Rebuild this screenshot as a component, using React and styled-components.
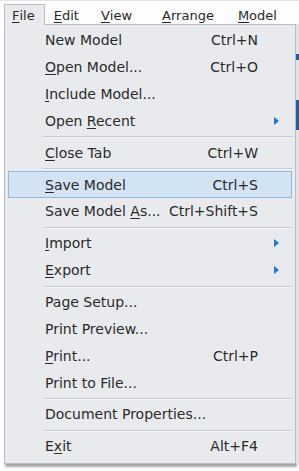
import React from 'react'
import styled, { createGlobalStyle } from 'styled-components'

const Global = createGlobalStyle`
    html, body {
        margin: 0;
        padding: 0;
        background: #ffffff;
    }
    body {
        font-family: "DejaVu Sans", "Liberation Sans", sans-serif;
        font-size: 14px;
        color: #2a2a2a;
    }
`

const Page = styled.div`
    width: 299px;
    height: 471px;
    overflow: hidden;
    display: flex;
    flex-direction: column;
    background: #ffffff;
`

const MenuBar = styled.div`
    height: 25px;
    display: flex;
    align-items: stretch;
    padding: 3px 0 0 4px;
    box-sizing: border-box;
    border-top: 1px solid #e2e4e8;
    background: #fdfdfd;
    font-size: 13px;
`

const BarItem = styled.div`
    display: flex;
    align-items: center;
    padding: ${p => (p.$active ? '0 9px 0 7px' : '0')};
    margin-left: ${p => p.$ml || 0}px;
    box-sizing: border-box;
    border: 1px solid ${p => (p.$active ? '#b9bdc5' : 'transparent')};
    border-bottom: none;
    background: ${p => (p.$active ? '#e9eaee' : 'transparent')};
    position: relative;
    z-index: 2;
`

const Key = styled.span`
    text-decoration: underline;
    text-underline-offset: 2px;
`

const Body = styled.div`
    flex: 1;
    display: flex;
    align-items: flex-start;
    padding-left: 4px;
`

const Menu = styled.div`
    width: 292px;
    margin-top: -1px;
    box-sizing: border-box;
    padding: 2px 0 3px 0;
    background: #e9eaee;
    border: 1px solid #b9bdc5;
    box-shadow: 1px 3px 2px rgba(0, 0, 0, 0.35);
    display: flex;
    flex-direction: column;
`

const Row = styled.div`
    height: 26.85px;
    display: flex;
    align-items: center;
    box-sizing: border-box;
    margin: 0 ${p => (p.$selected ? 3 : 0)}px;
    padding-left: ${p => (p.$selected ? 36 : 39)}px;
    padding-right: ${p => (p.$selected ? 11 : 14)}px;
    border: 1px solid ${p => (p.$selected ? '#93b8de' : 'transparent')};
    background: ${p => (p.$selected ? '#d2e3f4' : 'transparent')};
`

const Label = styled.span`
    flex: 1;
    white-space: nowrap;
`

const Shortcut = styled.span`
    white-space: nowrap;
    margin-right: 22px;
`

const Arrow = styled.span`
    width: 0;
    height: 0;
    border-top: 4px solid transparent;
    border-bottom: 4px solid transparent;
    border-left: 5px solid #1a78d0;
    margin-right: 1px;
`

const Separator = styled.div`
    height: 5px;
    display: flex;
    align-items: center;
    padding: 0 2px 0 38px;
    &::after {
        content: '';
        flex: 1;
        height: 1px;
        background: #c7cbd3;
        box-shadow: 0 1px 0 #f4f5f7;
    }
`

const Backdrop = styled.div`
    flex: 1;
    align-self: stretch;
    display: flex;
    flex-direction: column;
    margin-top: -1px;
    background: #dfe2e7;
    height: 440px;
`

const BackBlue = styled.div`
    height: ${p => p.$h}px;
    margin-top: ${p => p.$top}px;
    background: #1e5fa8;
`

const items = [
    { label: <>New Model</>, shortcut: 'Ctrl+N' },
    { label: <><Key>O</Key>pen Model...</>, shortcut: 'Ctrl+O' },
    { label: <><Key>I</Key>nclude Model...</> },
    { label: <>Open <Key>R</Key>ecent</>, sub: true },
    'sep',
    { label: <><Key>C</Key>lose Tab</>, shortcut: 'Ctrl+W' },
    'sep',
    { label: <><Key>S</Key>ave Model</>, shortcut: 'Ctrl+S', selected: true },
    { label: <>Save Model <Key>A</Key>s...</>, shortcut: 'Ctrl+Shift+S' },
    'sep',
    { label: <><Key>I</Key>mport</>, sub: true },
    { label: <><Key>E</Key>xport</>, sub: true },
    'sep',
    { label: <>Page Setup...</> },
    { label: <>Print Preview...</> },
    { label: <><Key>P</Key>rint...</>, shortcut: 'Ctrl+P' },
    { label: <>Print to File...</> },
    'sep',
    { label: <>Document Properties...</> },
    'sep',
    { label: <>E<Key>x</Key>it</>, shortcut: 'Alt+F4' },
]

export default function App() {
    return (
        <Page>
            <Global />
            <MenuBar>
                <BarItem $active><Key>F</Key>ile</BarItem>
                <BarItem $ml={8}><Key>E</Key>dit</BarItem>
                <BarItem $ml={20}><Key>V</Key>iew</BarItem>
                <BarItem $ml={28}><Key>A</Key>rrange</BarItem>
                <BarItem $ml={22}><Key>M</Key>odel</BarItem>
            </MenuBar>
            <Body>
                <Menu>
                    {items.map((it, i) =>
                        it === 'sep' ? (
                            <Separator key={i} />
                        ) : (
                            <Row key={i} $selected={it.selected}>
                                <Label>{it.label}</Label>
                                {it.shortcut && <Shortcut>{it.shortcut}</Shortcut>}
                                {it.sub && <Arrow />}
                            </Row>
                        )
                    )}
                </Menu>
                <Backdrop>
                    <BackBlue $top={30} $h={6} />
                    <BackBlue $top={40} $h={30} />
                </Backdrop>
            </Body>
        </Page>
    )
}
